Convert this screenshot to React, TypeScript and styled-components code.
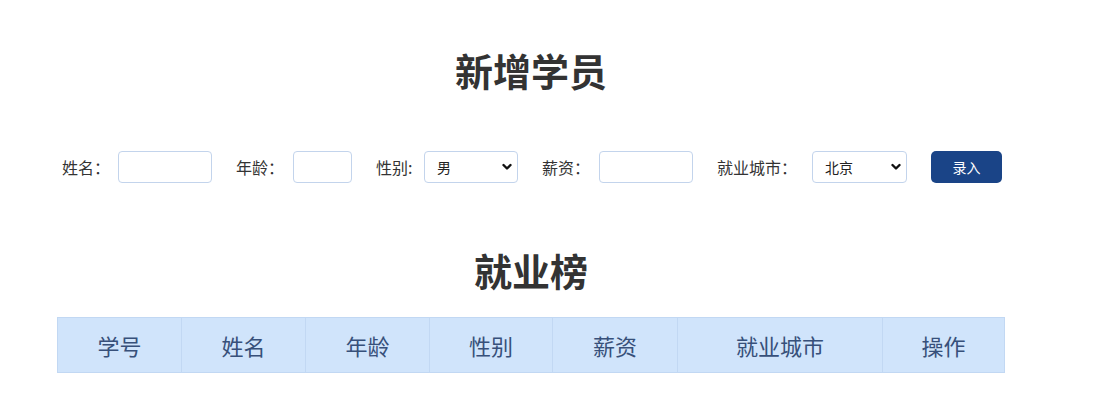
import React from "react";
import styled, { createGlobalStyle } from "styled-components";

const GlobalStyle = createGlobalStyle`
  body {
    margin: 0;
    background: #ffffff;
    font-family: "Noto Sans CJK SC", "Noto Sans", sans-serif;
    color: #333333;
  }
`;

interface Column {
  title: string;
  width: number;
}

// widths are the inner widths (borders collapse between them)
const columns: Column[] = [
  { title: "学号", width: 123 },
  { title: "姓名", width: 123 },
  { title: "年龄", width: 123 },
  { title: "性别", width: 122 },
  { title: "薪资", width: 124 },
  { title: "就业城市", width: 204 },
  { title: "操作", width: 121 },
];

function App() {
  return (
    <>
      <GlobalStyle />
      <Page>
        <Title>新增学员</Title>
        <Form onSubmit={(e) => e.preventDefault()}>
          <Field>
            <Label $w={48}>姓名：</Label>
            <TextInput $w={94} />
          </Field>
          <Field>
            <Label $w={49}>年龄：</Label>
            <TextInput $w={59} />
          </Field>
          <Field>
            <Label $w={40}>性别:</Label>
            <Dropdown width={94} options={["男", "女"]} />
          </Field>
          <Field>
            <Label $w={49}>薪资：</Label>
            <TextInput $w={94} />
          </Field>
          <Field>
            <Label $w={87}>就业城市：</Label>
            <Dropdown width={95} options={["北京", "上海", "广州", "深圳"]} />
          </Field>
          <SubmitButton type="submit">录入</SubmitButton>
        </Form>
        <SubTitle>就业榜</SubTitle>
        <Table>
          <thead>
            <tr>
              {columns.map((col) => (
                <Th key={col.title} $w={col.width}>
                  {col.title}
                </Th>
              ))}
            </tr>
          </thead>
          <tbody></tbody>
        </Table>
      </Page>
    </>
  );
}

export default App;

//select
interface DropdownProps {
  width: number;
  options: string[];
}

const Dropdown = ({ width, options }: DropdownProps) => {
  return (
    <SelectWrap $w={width}>
      <Select>
        {options.map((o) => (
          <option key={o}>{o}</option>
        ))}
      </Select>
      <Chevron viewBox="0 0 10 8">
        <polyline points="1.5,2 5,5.5 8.5,2" />
      </Chevron>
    </SelectWrap>
  );
};

const Page = styled.div`
  width: 948px;
  margin-left: 57px;
  padding-top: 46px;
`;

const Title = styled.h1`
  margin: 0;
  height: 48px;
  line-height: 48px;
  font-size: 38px;
  font-weight: 700;
  text-align: center;
  color: #333333;
`;

const SubTitle = styled(Title)`
  margin-top: 63px;
`;

const Form = styled.form`
  display: flex;
  align-items: center;
  gap: 24px;
  margin-top: 57px;
  padding-left: 5px;
  height: 32px;
`;

const Field = styled.div`
  display: flex;
  align-items: center;
  gap: 8px;
`;

const Label = styled.label<{ $w: number }>`
  width: ${(p) => p.$w}px;
  font-size: 16px;
  white-space: nowrap;
  color: #333333;
`;

const TextInput = styled.input<{ $w: number }>`
  box-sizing: border-box;
  width: ${(p) => p.$w}px;
  height: 32px;
  border: 1px solid #c3d4ec;
  border-radius: 4px;
  outline: none;
  padding: 0 8px;
  font-family: inherit;
  font-size: 14px;
`;

const SelectWrap = styled.div<{ $w: number }>`
  position: relative;
  width: ${(p) => p.$w}px;
  height: 32px;
`;

const Select = styled.select`
  box-sizing: border-box;
  appearance: none;
  width: 100%;
  height: 100%;
  border: 1px solid #c3d4ec;
  border-radius: 4px;
  background: #ffffff;
  padding: 0 24px 0 12px;
  font-family: inherit;
  font-size: 14px;
  color: #222222;
  outline: none;
`;

const Chevron = styled.svg`
  position: absolute;
  right: 6px;
  top: 12px;
  width: 10px;
  height: 8px;
  pointer-events: none;
  fill: none;
  stroke: #111111;
  stroke-width: 2.4;
  stroke-linecap: round;
  stroke-linejoin: round;
`;

const SubmitButton = styled.button`
  width: 71px;
  height: 32px;
  margin-top: -1px;
  border: none;
  border-radius: 5px;
  background: #1a4487;
  color: #ffffff;
  font-family: inherit;
  font-size: 14px;
  cursor: pointer;
`;

const Table = styled.table`
  margin-top: 23px;
  width: 948px;
  border-collapse: collapse;
  table-layout: fixed;
`;

const Th = styled.th<{ $w: number }>`
  width: ${(p) => p.$w}px;
  height: 54px;
  padding: 0;
  background: #d0e4fb;
  border: 1px solid #c2d8f3;
  font-size: 22px;
  font-weight: 400;
  color: #37507a;
  text-align: center;
`;
